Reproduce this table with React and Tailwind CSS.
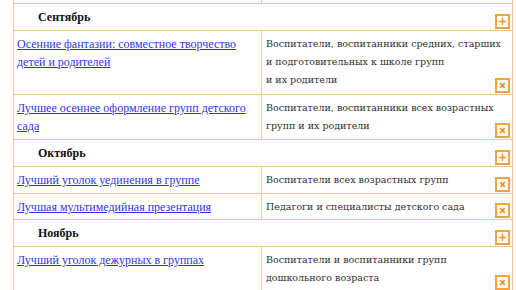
import React from "react";

const BORDER = "border-[#fcc58c]";

function Box({ kind }) {
  return (
    <div className="absolute right-[2px] bottom-[1px] w-[15px] h-[15px] border-2 border-[#f7a040] flex items-center justify-center bg-white">
      {kind === "plus" ? (
        <svg width="11" height="11" viewBox="0 0 11 11">
          <path d="M5.5 1.8V9.2M1.8 5.5H9.2" stroke="#f7941d" strokeWidth="1.4" />
        </svg>
      ) : (
        <svg width="7" height="7" viewBox="0 0 7 7">
          <path d="M1.2 1.2L5.8 5.8M5.8 1.2L1.2 5.8" stroke="#f7941d" strokeWidth="1.8" />
        </svg>
      )}
    </div>
  );
}

function Month({ name }) {
  return (
    <div className={`relative border-l border-r border-b ${BORDER}`}>
      <div
        className="pl-[24px] pt-[4px] pb-[4px] text-[12px] leading-[18px] font-bold text-[#111]"
        style={{ fontFamily: '"Liberation Serif", serif' }}
      >
        {name}
      </div>
      <Box kind="plus" />
    </div>
  );
}

function Row({ left, right, pb = "pb-[4px]" }) {
  return (
    <div className={`flex border-l border-r border-b ${BORDER}`}>
      <div
        className={`w-[247px] shrink-0 pl-[3px] pr-[2px] pt-[4px] ${pb} text-[12px] leading-[18px]`}
        style={{ fontFamily: '"Liberation Serif", serif' }}
      >
        <a href="#" className="text-[#3333e6] underline">
          {left}
        </a>
      </div>
      <div className={`relative flex-1 border-l ${BORDER}`}>
        <div
          className={`pl-[4px] pr-[4px] pt-[4px] ${pb} text-[9.5px] leading-[18px] text-[#2e2e2e]`}
          style={{ fontFamily: '"DejaVu Serif", serif' }}
        >
          {right}
        </div>
        <Box kind="x" />
      </div>
    </div>
  );
}

export default function App() {
  return (
    <div className="w-[516px] h-[290px] overflow-hidden bg-white">
      <div className="ml-[13px] w-[500px]">
        <div className={`flex h-[4px] border-l border-r border-b ${BORDER}`}>
          <div className="w-[247px] shrink-0" />
          <div className={`flex-1 border-l ${BORDER}`} />
        </div>
        <Month name="Сентябрь" />
        <Row
          left="Осенние фантазии: совместное творчество детей и родителей"
          right={
            <>
              Воспитатели, воспитанники средних, старших и подготовительных к школе групп
              <br />и их родители
            </>
          }
          pb="pb-[5px]"
        />
        <Row
          left="Лучшее осеннее оформление групп детского сада"
          right="Воспитатели, воспитанники всех возрастных групп и их родители"
        />
        <Month name="Октябрь" />
        <Row left="Лучший уголок уединения в группе" right="Воспитатели всех возрастных групп" />
        <Row left="Лучшая мультимедийная презентация" right="Педагоги и специалисты детского сада" pb="pb-[3px]" />
        <Month name="Ноябрь" />
        <Row
          left="Лучший уголок дежурных в группах"
          right="Воспитатели и воспитанники групп дошкольного возраста"
        />
      </div>
    </div>
  );
}
